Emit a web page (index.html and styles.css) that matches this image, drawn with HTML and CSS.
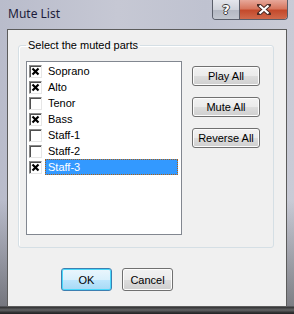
FILE: index.html
```html
<!DOCTYPE html>
<html lang="en">

<head>
    <meta charset="UTF-8">
    <title>Mute List</title>
    <link rel="stylesheet" href="styles.css">
</head>

<body>
    <div class="window">
        <!-- Title bar -->
        <div class="titlebar">
            <span class="title">Mute List</span>
            <div class="caption-buttons">
                <div class="cap-btn help">?</div>
                <div class="cap-btn close">
                    <svg width="14" height="11" viewBox="0 0 14 11">
                        <path d="M2 1 L12 10 M12 1 L2 10" stroke="#4a2a24" stroke-width="4" stroke-linecap="square" />
                        <path d="M2.5 1.5 L11.5 9.5 M11.5 1.5 L2.5 9.5" stroke="#ffffff" stroke-width="2.2" />
                    </svg>
                </div>
            </div>
        </div>

        <!-- Dialog body -->
        <div class="client">
            <fieldset class="group">
                <legend>Select the muted parts</legend>
                <div class="group-body">
                    <ul class="part-list">
                        <li class="part"><span class="check checked"></span><span class="part-name">Soprano</span></li>
                        <li class="part"><span class="check checked"></span><span class="part-name">Alto</span></li>
                        <li class="part"><span class="check"></span><span class="part-name">Tenor</span></li>
                        <li class="part"><span class="check checked"></span><span class="part-name">Bass</span></li>
                        <li class="part"><span class="check"></span><span class="part-name">Staff-1</span></li>
                        <li class="part"><span class="check"></span><span class="part-name">Staff-2</span></li>
                        <li class="part selected"><span class="check checked"></span><span class="part-name">Staff-3</span></li>
                    </ul>
                    <div class="side-buttons">
                        <button class="btn side-btn">Play All</button>
                        <button class="btn side-btn">Mute All</button>
                        <button class="btn side-btn">Reverse All</button>
                    </div>
                </div>
            </fieldset>

            <div class="footer">
                <button class="btn dlg-btn default">OK</button>
                <button class="btn dlg-btn">Cancel</button>
            </div>
        </div>
    </div>
</body>

</html>
```

FILE: styles.css
```css
* {
    margin: 0;
    padding: 0;
    box-sizing: border-box;
}

body {
    width: 294px;
    height: 314px;
    overflow: hidden;
    font-family: 'Liberation Sans', Arial, sans-serif;
    font-size: 11px;
    color: #000;
}

.window {
    width: 294px;
    height: 314px;
    display: flex;
    flex-direction: column;
    padding: 0 7px 7px 7px;
    background:
        linear-gradient(to bottom, rgba(0, 0, 0, 0) 0, rgba(0, 0, 0, 0) 306px, rgba(30, 30, 30, 0.8) 307px, rgba(90, 90, 90, 0.7) 310px, rgba(20, 20, 20, 0.8) 313px),
        linear-gradient(to bottom, rgba(0, 0, 0, 0) 0, rgba(0, 0, 0, 0) 200px, rgba(40, 40, 40, 0.5) 314px),
        linear-gradient(to right, #b9bccb 0, #c6c8d4 40%, #bfc2d0 70%, #c9cbd6 100%);
}

/* title bar */
.titlebar {
    height: 29px;
    display: flex;
    justify-content: space-between;
    align-items: flex-start;
    margin-right: -1px;
}

.title {
    font-family: 'Noto Sans', sans-serif;
    font-size: 12px;
    color: #1c1c3a;
    padding: 6px 0 0 1px;
    line-height: 16px;
}

.caption-buttons {
    display: flex;
    border: 1px solid #5a5e6a;
    border-top: none;
    border-radius: 0 0 4px 4px;
    overflow: hidden;
    height: 20px;
}

.cap-btn {
    height: 19px;
    display: flex;
    align-items: center;
    justify-content: center;
}

.help {
    width: 27px;
    border-right: 1px solid #5a5e6a;
    background: linear-gradient(to bottom, #e4e6ec 0, #cfd2da 50%, #b3b7c2 51%, #c2c6cf 100%);
    color: #fff;
    font-family: 'DejaVu Sans', sans-serif;
    font-weight: bold;
    font-size: 13px;
    text-shadow: 1px 0 0 #3a3a3a, -1px 0 0 #3a3a3a, 0 1px 0 #3a3a3a, 0 -1px 0 #3a3a3a;
}

.close {
    width: 47px;
    background: linear-gradient(to bottom, #e7a89a 0, #d7775f 45%, #c44a2c 55%, #d06a4c 100%);
}

/* dialog client area */
.client {
    flex: 1;
    background-color: #f0f0f0;
    border: 1px solid #5c5c5c;
    padding: 8px 12px 0 10px;
}

.group {
    border: 1px solid #d5dfe5;
    border-radius: 3px;
    box-shadow: inset 1px 1px 0 #fff;
    padding: 9px 13px 12px 7px;
    height: 210px;
}

.group legend {
    padding: 0 2px;
    line-height: 14px;
    color: #000;
}

.group-body {
    display: flex;
    gap: 10px;
}

/* checkbox list */
.part-list {
    list-style: none;
    width: 156px;
    height: 174px;
    background-color: #fff;
    border: 1px solid #828790;
    padding-top: 1px;
}

.part {
    height: 16px;
    display: flex;
    align-items: center;
    padding-left: 2px;
}

.check {
    width: 13px;
    height: 13px;
    flex-shrink: 0;
    border: 1px solid;
    border-color: #8a8a8a #e6e6e6 #e6e6e6 #8a8a8a;
    box-shadow: inset 1px 1px 0 #505050;
    background-color: #fff;
}

.check.checked {
    background-image: url("data:image/svg+xml,%3Csvg xmlns='http://www.w3.org/2000/svg' width='11' height='11'%3E%3Cpath d='M2.5 2.5 L8.5 8.5 M8.5 2.5 L2.5 8.5' stroke='black' stroke-width='2.2'/%3E%3C/svg%3E");
    background-repeat: no-repeat;
    background-position: 0 0;
}

.part-name {
    flex: 1;
    height: 16px;
    line-height: 14px;
    padding: 0 2px;
    margin: 0 3px 0 3px;
    border: 1px solid transparent;
}

.part.selected .part-name {
    background-color: #3399ff;
    color: #fff;
    border: 1px dotted #b06010;
}

/* buttons */
.btn {
    font-family: 'Liberation Sans', Arial, sans-serif;
    font-size: 11px;
    color: #000;
    border: 1px solid #707070;
    border-radius: 3px;
    background: linear-gradient(to bottom, #f2f2f2 0, #ebebeb 50%, #dddddd 51%, #cfcfcf 100%);
    box-shadow: inset 0 0 0 1px #fcfcfc;
}

.side-buttons {
    display: flex;
    flex-direction: column;
    gap: 11px;
    padding-top: 5px;
}

.side-btn {
    width: 68px;
    height: 20px;
}

.footer {
    display: flex;
    gap: 10px;
    padding-left: 43px;
    margin-top: 20px;
}

.dlg-btn {
    width: 51px;
    height: 23px;
}

.dlg-btn.default {
    border-color: #3c7fb1;
    background: linear-gradient(to bottom, #eaf6fd 0, #d9f0fc 50%, #bee6fd 51%, #a7d9f5 100%);
    box-shadow: inset 0 0 0 1px #48d8fb;
}
```
